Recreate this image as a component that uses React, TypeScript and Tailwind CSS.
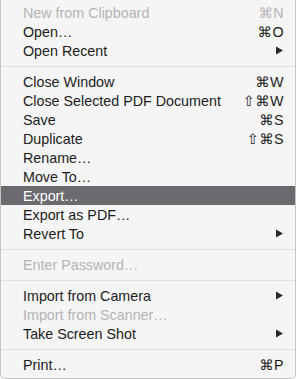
import React from "react";

type Item =
  | { sep: true }
  | { label: string; sc?: string; sub?: boolean; dis?: boolean; hl?: boolean };

const items: Item[] = [
  { label: "New from Clipboard", sc: "⌘N", dis: true },
  { label: "Open…", sc: "⌘O" },
  { label: "Open Recent", sub: true },
  { sep: true },
  { label: "Close Window", sc: "⌘W" },
  { label: "Close Selected PDF Document", sc: "⇧⌘W" },
  { label: "Save", sc: "⌘S" },
  { label: "Duplicate", sc: "⇧⌘S" },
  { label: "Rename…" },
  { label: "Move To…" },
  { label: "Export…", hl: true },
  { label: "Export as PDF…" },
  { label: "Revert To", sub: true },
  { sep: true },
  { label: "Enter Password…", dis: true },
  { sep: true },
  { label: "Import from Camera", sub: true },
  { label: "Import from Scanner…", dis: true },
  { label: "Take Screen Shot", sub: true },
  { sep: true },
  { label: "Print…", sc: "⌘P" },
];

function Arrow({ color }: { color: string }) {
  return (
    <svg width="7" height="9" viewBox="0 0 7 9">
      <path d="M0 0.5 L7 4.5 L0 8.5 Z" fill={color} />
    </svg>
  );
}

export default function App() {
  return (
    <div
      className="w-[296px] h-[379px] bg-[#f5f5f5] border-x border-b border-[#c4c4c4] rounded-b-[5px] pt-[3px] overflow-hidden"
      style={{ fontFamily: '"Liberation Sans", Arial, "DejaVu Sans", sans-serif' }}
    >
      {items.map((it, i) => {
        if ("sep" in it) {
          return (
            <div key={i} className="h-[12px] flex items-center">
              <div className="h-px w-full bg-[#e0e0e0]" />
            </div>
          );
        }
        const color = it.hl ? "text-white" : it.dis ? "text-[#b4b4b4]" : "text-[#1c1c1c]";
        return (
          <div
            key={i}
            className={`h-[19px] flex items-center justify-between pl-[22px] pr-[11px] pt-[1px] text-[14.3px] leading-[19px] ${color} ${
              it.hl ? "bg-[#6b6a6f]" : ""
            }`}
          >
            <span>{it.label}</span>
            {it.sc && (
              <span
                className="tracking-[0.5px]"
                style={{ fontFamily: '"Liberation Sans", "DejaVu Sans", sans-serif' }}
              >
                {it.sc}
              </span>
            )}
            {it.sub && (
              <span className="pr-[1px] pb-[1px]">
                <Arrow color={it.hl ? "#ffffff" : "#2a2a2a"} />
              </span>
            )}
          </div>
        );
      })}
    </div>
  );
}
